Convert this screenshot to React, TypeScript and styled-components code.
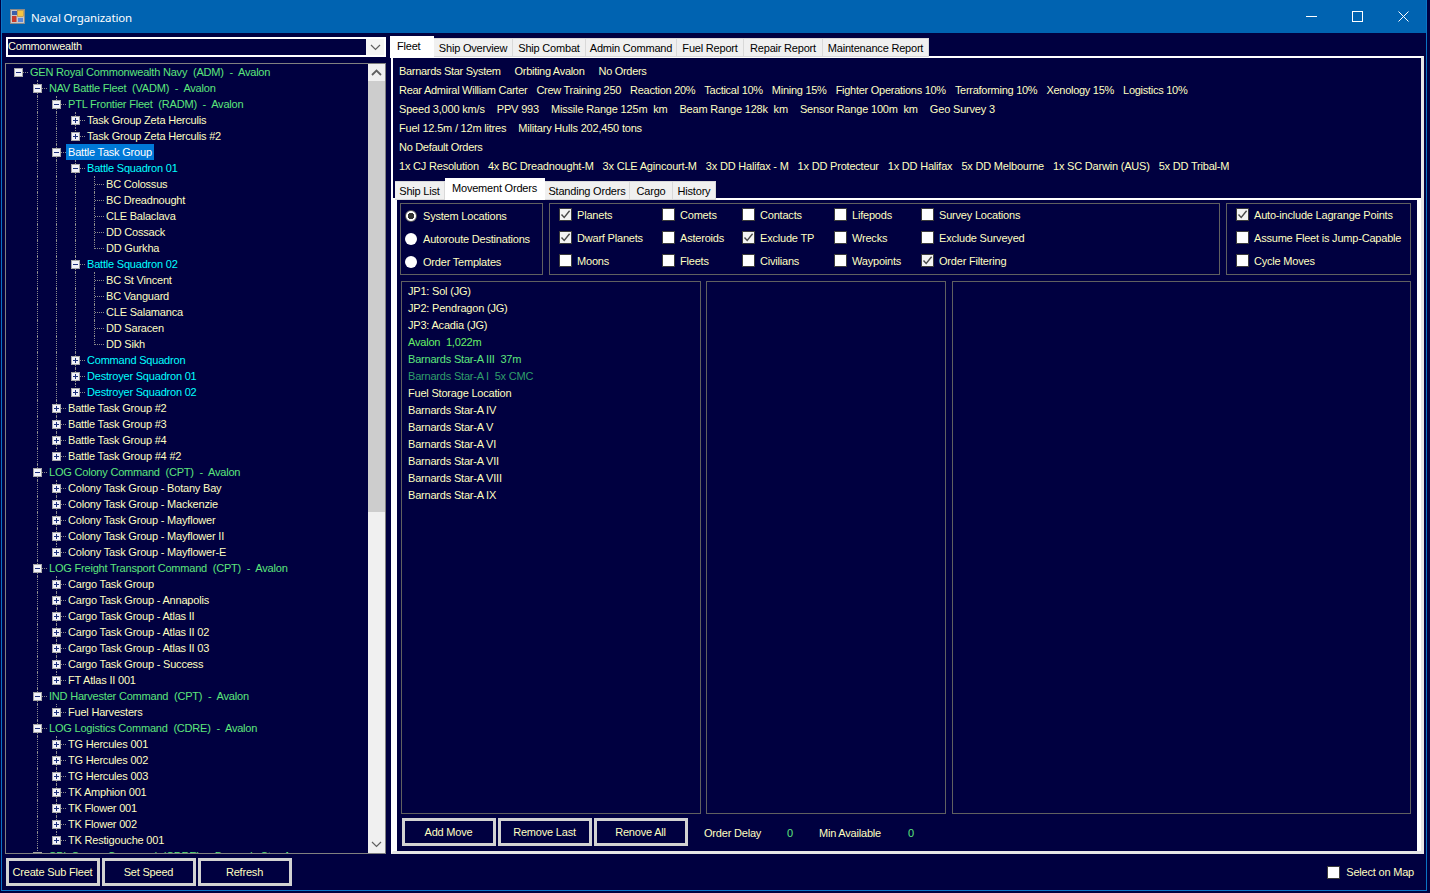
import React from "react";
import styled, { createGlobalStyle, css } from "styled-components";

const NAVY = "#000040";
const CREAM = "#ffffc0";
const GREEN = "#5ce67c";

const Global = createGlobalStyle`
  html, body { margin: 0; padding: 0; background: ${NAVY}; overflow: hidden; }
  body { font-family: "Liberation Sans", Arial, sans-serif; font-size: 11px; letter-spacing: -0.2px; color: ${CREAM}; }
  * { box-sizing: border-box; }
`;

const Window = styled.div`
  margin-left: 1px;
  width: 1426px;
  height: 891px;
  background: ${NAVY};
  border: 1px solid #0a74c4;
  border-top: 0;
  display: flex;
  flex-direction: column;
`;
const TitleBar = styled.header`
  height: 33px;
  flex: none;
  background: #0063b1;
  display: flex;
  align-items: center;
  padding-left: 8px;
  color: #fff;
  font-family: "Noto Sans", sans-serif;
  font-size: 11.5px;
  letter-spacing: -0.15px;
`;
const TitleText = styled.span`
  margin-left: 6px;
  padding-top: 1px;
  flex: 1;
`;
const WinButton = styled.div`
  width: 46px;
  height: 33px;
  display: flex;
  align-items: center;
  justify-content: center;
`;
const Body = styled.div`
  flex: 1;
  padding: 4px 2px 0 3px;
  display: flex;
  flex-direction: column;
`;
const TopRow = styled.div`
  display: flex;
  gap: 5px;
  height: 817px;
`;
const LeftCol = styled.div`
  width: 381px;
  flex: none;
  display: flex;
  flex-direction: column;
`;
const Combo = styled.div`
  height: 20px;
  margin-left: 1px;
  width: 380px;
  flex: none;
  border: 2px solid #fff;
  background: #f4f4f4;
  display: flex;
`;
const ComboText = styled.div`
  flex: 1;
  background: ${NAVY};
  line-height: 15px;
  color: #ffffd8;
`;
const ComboArrow = styled.div`
  width: 18px;
  display: flex;
  align-items: center;
  justify-content: center;
`;
const TreeBox = styled.div`
  margin-top: 6px;
  flex: 1;
  border: 1px solid #808080;
  display: flex;
  min-height: 0;
`;
const TreeScroll = styled.div`
  flex: 1;
  overflow: hidden;
`;
const Row = styled.div`
  height: 16px;
  display: flex;
  padding-left: 3px;
  white-space: pre;
`;
const Cell = styled.div<{ $v?: "full" | "half"; $elbow?: boolean }>`
  width: 19px;
  height: 16px;
  flex: none;
  position: relative;
  ${(p) =>
    p.$v &&
    css`
      &::before {
        content: "";
        position: absolute;
        left: 9px;
        top: 0;
        height: ${p.$v === "full" ? "16px" : "9px"};
        border-left: 1px dotted #8a8a8a;
      }
    `}
  ${(p) =>
    p.$elbow &&
    css`
      &::after {
        content: "";
        position: absolute;
        left: 10px;
        top: 8px;
        width: 9px;
        border-top: 1px dotted #8a8a8a;
      }
    `}
`;
const Expander = styled.span<{ $open: boolean }>`
  position: absolute;
  left: 5px;
  top: 4px;
  width: 9px;
  height: 9px;
  z-index: 1;
  background: #f2f2fa;
  border: 1px solid #a6a6a6;
  &::before {
    content: "";
    position: absolute;
    left: 1px;
    top: 3px;
    width: 5px;
    height: 1px;
    background: #1c2f7a;
  }
  ${(p) =>
    !p.$open &&
    css`
      &::after {
        content: "";
        position: absolute;
        left: 3px;
        top: 1px;
        width: 1px;
        height: 5px;
        background: #1c2f7a;
      }
    `}
`;
const TONES: Record<string, string> = { g: GREEN, c: "#00ffff", y: CREAM };
const Label = styled.span<{ $tone: string; $selected?: boolean }>`
  height: 16px;
  line-height: 16px;
  padding: 0 2px;
  color: ${(p) => (p.$selected ? "#ffffff" : TONES[p.$tone])};
  background: ${(p) => (p.$selected ? "#0078d7" : "transparent")};
`;
const ScrollBar = styled.div`
  width: 17px;
  flex: none;
  background: #f0f0f0;
  display: flex;
  flex-direction: column;
`;
const ScrollButton = styled.div`
  height: 17px;
  flex: none;
  display: flex;
  align-items: center;
  justify-content: center;
`;
const ScrollThumb = styled.div`
  height: 431px;
  flex: none;
  background: #cdcdcd;
`;
const ScrollGap = styled.div`
  flex: 1;
`;
const RightCol = styled.div`
  width: 1033px;
  flex: none;
  margin-top: -1px;
  display: flex;
  flex-direction: column;
  min-height: 0;
`;
const TabStrip = styled.div<{ $h: number; $left: number }>`
  display: flex;
  height: ${(p) => p.$h}px;
  flex: none;
  padding-left: ${(p) => p.$left}px;
  position: relative;
  z-index: 2;
`;
const Tab = styled.div<{ $w: number; $active?: boolean; $top: number; $shift?: number }>`
  width: ${(p) => p.$w}px;
  color: #000;
  white-space: nowrap;
  text-align: center;
  flex: none;
  margin-left: ${(p) => p.$shift || 0}px;
  ${(p) =>
    p.$active
      ? css`
          height: 22px;
          background: #fff;
          line-height: 20px;
          text-align: left;
          padding-left: 7px;
        `
      : css`
          height: 19px;
          margin-top: ${p.$top}px;
          background: #f0f0f0;
          border: 1px solid #d9d9d9;
          border-left: 0;
          line-height: 18px;
        `}
`;
const OuterFrame = styled.div`
  flex: 1;
  min-height: 0;
  border-top: 2px solid #fff;
  border-left: 2px solid #fff;
  border-right: 3px solid #e6e6e6;
  border-bottom: 3px solid #e6e6e6;
  background: ${NAVY};
  display: flex;
  flex-direction: column;
`;
const InfoBlock = styled.div`
  height: 120px;
  flex: none;
  padding: 4px 0 0 6px;
`;
const InfoRow = styled.div<{ $gap: number; $ls: number }>`
  height: 19px;
  line-height: 18px;
  display: flex;
  gap: ${(p) => p.$gap}px;
  letter-spacing: ${(p) => p.$ls}px;
  white-space: pre;
`;
const InnerFrame = styled.div`
  flex: 1;
  min-height: 0;
  border-top: 2px solid #fff;
  border-left: 4px solid #fff;
  border-right: 4px solid #fff;
  background: ${NAVY};
  padding: 3px 6px 0 3px;
  display: flex;
  flex-direction: column;
`;
const GroupRow = styled.div`
  display: flex;
  gap: 6px;
  height: 72px;
  flex: none;
`;
const Group = styled.div<{ $w: number }>`
  width: ${(p) => p.$w}px;
  flex: none;
  border: 1px solid #606060;
`;
const RadioList = styled.div`
  padding: 0 0 0 4px;
  display: grid;
  grid-auto-rows: 23px;
`;
const RadioRow = styled.label`
  display: flex;
  align-items: center;
  gap: 6px;
  white-space: nowrap;
`;
const RadioDot = styled.span<{ $on?: boolean }>`
  width: 12px;
  height: 12px;
  flex: none;
  border-radius: 50%;
  background: #fff;
  ${(p) =>
    p.$on &&
    css`
      border: 1px solid #555;
      background: radial-gradient(circle, #333 0 3px, #fff 3.5px);
    `}
`;
const CheckGrid = styled.div<{ $cols: string }>`
  display: grid;
  grid-template-columns: ${(p) => p.$cols};
  padding-left: 9px;
  margin-top: -1px;
  grid-auto-flow: column;
  grid-template-rows: repeat(3, 23px);
`;
const CheckRow = styled.label`
  display: flex;
  align-items: center;
  gap: 5px;
  white-space: nowrap;
  height: 23px;
`;
const Box = styled.span<{ $on?: boolean }>`
  width: 13px;
  height: 13px;
  flex: none;
  background: ${(p) => (p.$on ? "#f4f4f4" : "#fff")};
  border: 1px solid #3c3c3c;
  display: flex;
  align-items: center;
  justify-content: center;
`;
const ListRow = styled.div`
  margin-top: 6px;
  height: 533px;
  flex: none;
  display: flex;
`;
const ListBox = styled.div<{ $w: number; $gap: number }>`
  width: ${(p) => p.$w}px;
  margin-left: ${(p) => p.$gap}px;
  flex: none;
  border: 1px solid #606060;
  padding: 1px 0 0 6px;
`;
const ListItem = styled.div<{ $c?: string }>`
  height: 17px;
  line-height: 17px;
  white-space: pre;
  color: ${(p) => p.$c || CREAM};
`;
const ActionRow = styled.div`
  margin-top: 4px;
  display: flex;
  align-items: center;
  padding-left: 2px;
  gap: 2px;
`;
const Btn = styled.div`
  width: 94px;
  height: 28px;
  flex: none;
  border: 3px solid #d2d2d2;
  display: flex;
  align-items: center;
  justify-content: center;
  padding: 0 1px 1px 0;
  white-space: nowrap;
`;
const Stat = styled.span<{ $w: number; $c?: string; $lead?: number }>`
  width: ${(p) => p.$w}px;
  margin-left: ${(p) => p.$lead || 0}px;
  flex: none;
  color: ${(p) => p.$c || CREAM};
  padding-top: 2px;
  white-space: nowrap;
`;
const Footer = styled.div`
  margin-top: 4px;
  height: 28px;
  padding: 0 10px 0 1px;
  display: flex;
  align-items: center;
  gap: 2px;
`;
const FooterSpacer = styled.div`
  flex: 1;
`;
const FooterCheck = styled(CheckRow)`
  gap: 6px;
`;

type N = [number, "g" | "c" | "y", "o" | "+" | "", string];
const group = (d: number, names: string[]): N[] => names.map((t) => [d, "y", "+", t] as N);
const leaves = (d: number, names: string[]): N[] => names.map((t) => [d, "y", "", t] as N);

const tree: N[] = [
  [0, "g", "o", "GEN Royal Commonwealth Navy  (ADM)  -  Avalon"],
  [1, "g", "o", "NAV Battle Fleet  (VADM)  -  Avalon"],
  [2, "g", "o", "PTL Frontier Fleet  (RADM)  -  Avalon"],
  ...group(3, ["Task Group Zeta Herculis", "Task Group Zeta Herculis #2"]),
  [2, "y", "o", "Battle Task Group"],
  [3, "c", "o", "Battle Squadron 01"],
  ...leaves(4, ["BC Colossus", "BC Dreadnought", "CLE Balaclava", "DD Cossack", "DD Gurkha"]),
  [3, "c", "o", "Battle Squadron 02"],
  ...leaves(4, ["BC St Vincent", "BC Vanguard", "CLE Salamanca", "DD Saracen", "DD Sikh"]),
  [3, "c", "+", "Command Squadron"],
  [3, "c", "+", "Destroyer Squadron 01"],
  [3, "c", "+", "Destroyer Squadron 02"],
  ...group(2, ["Battle Task Group #2", "Battle Task Group #3", "Battle Task Group #4", "Battle Task Group #4 #2"]),
  [1, "g", "o", "LOG Colony Command  (CPT)  -  Avalon"],
  ...group(2, [
    "Colony Task Group - Botany Bay",
    "Colony Task Group - Mackenzie",
    "Colony Task Group - Mayflower",
    "Colony Task Group - Mayflower II",
    "Colony Task Group - Mayflower-E",
  ]),
  [1, "g", "o", "LOG Freight Transport Command  (CPT)  -  Avalon"],
  ...group(2, [
    "Cargo Task Group",
    "Cargo Task Group - Annapolis",
    "Cargo Task Group - Atlas II",
    "Cargo Task Group - Atlas II 02",
    "Cargo Task Group - Atlas II 03",
    "Cargo Task Group - Success",
    "FT Atlas II 001",
  ]),
  [1, "g", "o", "IND Harvester Command  (CPT)  -  Avalon"],
  ...group(2, ["Fuel Harvesters"]),
  [1, "g", "o", "LOG Logistics Command  (CDRE)  -  Avalon"],
  ...group(2, [
    "TG Hercules 001",
    "TG Hercules 002",
    "TG Hercules 003",
    "TK Amphion 001",
    "TK Flower 001",
    "TK Flower 002",
    "TK Restigouche 001",
  ]),
  [1, "g", "o", "SPL Survey Command  (CDRE)  -  Barnards Star-A"],
];

const continues = (i: number, col: number) => {
  for (let j = i + 1; j < tree.length; j++) {
    if (tree[j][0] === col) return true;
    if (tree[j][0] < col) return false;
  }
  return false;
};

const TreeRows = () => (
  <>
    {tree.map((n, i) => {
      const [depth, tone, exp, text] = n;
      const cells = [];
      for (let c = 0; c <= depth; c++) {
        const cont = continues(i, c);
        if (c === depth) {
          cells.push(
            <Cell key={c} $elbow $v={depth === 0 ? undefined : cont ? "full" : "half"}>
              {exp && <Expander $open={exp === "o"} />}
            </Cell>
          );
        } else {
          cells.push(<Cell key={c} $v={cont ? "full" : undefined} />);
        }
      }
      return (
        <Row key={i}>
          {cells}
          <Label $tone={tone} $selected={text === "Battle Task Group"}>
            {text}
          </Label>
        </Row>
      );
    })}
  </>
);

const Chevron = ({ up, color = "#606060" }: { up?: boolean; color?: string }) => (
  <svg width="11" height="7" viewBox="0 0 11 7">
    <path d={up ? "M1 6 L5.5 1.5 L10 6" : "M1 1 L5.5 5.5 L10 1"} fill="none" stroke={color} strokeWidth={up ? 1.8 : 1.2} />
  </svg>
);

const Tick = () => (
  <svg width="11" height="11" viewBox="0 0 11 11">
    <path d="M1.5 5.5 L4.2 8.5 L9.6 1.8" fill="none" stroke="#4a4a4a" strokeWidth="1.4" />
  </svg>
);

const Check = ({ on, children }: { on?: boolean; children: string }) => (
  <CheckRow>
    <Box $on={on}>{on && <Tick />}</Box>
    {children}
  </CheckRow>
);

const AppIcon = () => (
  <svg width="15" height="15" viewBox="0 0 15 15">
    <rect x="0.5" y="0.5" width="14" height="14" fill="#c8c8c8" stroke="#8a8a8a" />
    <rect x="2" y="2" width="5" height="4" fill="#3b5fa8" />
    <rect x="7.5" y="1.5" width="6" height="6" fill="#f5c542" stroke="#a8802a" strokeWidth="0.5" />
    <rect x="2" y="7" width="4.5" height="6" fill="#c83a2a" />
    <rect x="8" y="9" width="5" height="4" fill="#5a86d8" />
  </svg>
);

const mainTabs: [string, number][] = [
  ["Ship Overview", 79],
  ["Ship Combat", 73],
  ["Admin Command", 91],
  ["Fuel Report", 67],
  ["Repair Report", 79],
  ["Maintenance Report", 106],
];

const info: [number, number, string[]][] = [
  [14, -0.3, ["Barnards Star System", "Orbiting Avalon", "No Orders"]],
  [9, -0.27, ["Rear Admiral William Carter", "Crew Training 250", "Reaction 20%", "Tactical 10%", "Mining 15%", "Fighter Operations 10%", "Terraforming 10%", "Xenology 15%", "Logistics 10%"]],
  [12, -0.18, ["Speed 3,000 km/s", "PPV 993", "Missile Range 125m  km", "Beam Range 128k  km", "Sensor Range 100m  km", "Geo Survey 3"]],
  [12, -0.2, ["Fuel 12.5m / 12m litres", "Military Hulls 202,450 tons"]],
  [12, -0.3, ["No Default Orders"]],
  [9, -0.2, ["1x CJ Resolution", "4x BC Dreadnought-M", "3x CLE Agincourt-M", "3x DD Halifax - M", "1x DD Protecteur", "1x DD Halifax", "5x DD Melbourne", "1x SC Darwin (AUS)", "5x DD Tribal-M"]],
];

const midChecks: [string, boolean][] = [
  ["Planets", true], ["Dwarf Planets", true], ["Moons", false],
  ["Comets", false], ["Asteroids", false], ["Fleets", false],
  ["Contacts", false], ["Exclude TP", true], ["Civilians", false],
  ["Lifepods", false], ["Wrecks", false], ["Waypoints", false],
  ["Survey Locations", false], ["Exclude Surveyed", false], ["Order Filtering", true],
];

const moves: [string, string?][] = [
  ["JP1: Sol (JG)"],
  ["JP2: Pendragon (JG)"],
  ["JP3: Acadia (JG)"],
  ["Avalon  1,022m", "#66f066"],
  ["Barnards Star-A III  37m", "#5ce67c"],
  ["Barnards Star-A I  5x CMC", "#2f9e6a"],
  ["Fuel Storage Location"],
  ["Barnards Star-A IV"],
  ["Barnards Star-A V"],
  ["Barnards Star-A VI"],
  ["Barnards Star-A VII"],
  ["Barnards Star-A VIII"],
  ["Barnards Star-A IX"],
];

export default function App() {
  return (
    <>
      <Global />
      <Window>
        <TitleBar>
          <AppIcon />
          <TitleText>Naval Organization</TitleText>
          <WinButton>
            <svg width="11" height="11" viewBox="0 0 11 11"><path d="M0 5.5 H11" stroke="#fff" strokeWidth="1" /></svg>
          </WinButton>
          <WinButton>
            <svg width="11" height="11" viewBox="0 0 11 11"><rect x="0.5" y="0.5" width="10" height="10" fill="none" stroke="#fff" /></svg>
          </WinButton>
          <WinButton>
            <svg width="11" height="11" viewBox="0 0 11 11"><path d="M0.5 0.5 L10.5 10.5 M10.5 0.5 L0.5 10.5" stroke="#fff" strokeWidth="1" /></svg>
          </WinButton>
        </TitleBar>
        <Body>
          <TopRow>
            <LeftCol>
              <Combo>
                <ComboText>Commonwealth</ComboText>
                <ComboArrow><Chevron /></ComboArrow>
              </Combo>
              <TreeBox>
                <TreeScroll><TreeRows /></TreeScroll>
                <ScrollBar>
                  <ScrollButton><Chevron up /></ScrollButton>
                  <ScrollThumb />
                  <ScrollGap />
                  <ScrollButton><Chevron /></ScrollButton>
                </ScrollBar>
              </TreeBox>
            </LeftCol>
            <RightCol>
              <TabStrip $h={20} $left={0}>
                <Tab $w={44} $top={0} $active $shift={-1}>Fleet</Tab>
                {mainTabs.map(([t, w]) => (
                  <Tab key={t} $w={w} $top={2}>{t}</Tab>
                ))}
              </TabStrip>
              <OuterFrame>
                <InfoBlock>
                  {info.map(([gap, ls, items], i) => (
                    <InfoRow key={i} $gap={gap} $ls={ls}>
                      {items.map((t) => <span key={t}>{t}</span>)}
                    </InfoRow>
                  ))}
                </InfoBlock>
                <TabStrip $h={20} $left={2}>
                  <Tab $w={50} $top={3}>Ship List</Tab>
                  <Tab $w={100} $top={0} $active>Movement Orders</Tab>
                  <Tab $w={85} $top={3}>Standing Orders</Tab>
                  <Tab $w={43} $top={3}>Cargo</Tab>
                  <Tab $w={43} $top={3}>History</Tab>
                </TabStrip>
                <InnerFrame>
                  <GroupRow>
                    <Group $w={143}>
                      <RadioList>
                        <RadioRow><RadioDot $on />System Locations</RadioRow>
                        <RadioRow><RadioDot />Autoroute Destinations</RadioRow>
                        <RadioRow><RadioDot />Order Templates</RadioRow>
                      </RadioList>
                    </Group>
                    <Group $w={671}>
                      <CheckGrid $cols="103px 80px 92px 87px 1fr">
                        {midChecks.map(([t, on]) => <Check key={t} on={on}>{t}</Check>)}
                      </CheckGrid>
                    </Group>
                    <Group $w={185}>
                      <CheckGrid $cols="1fr">
                        <Check on>Auto-include Lagrange Points</Check>
                        <Check>Assume Fleet is Jump-Capable</Check>
                        <Check>Cycle Moves</Check>
                      </CheckGrid>
                    </Group>
                  </GroupRow>
                  <ListRow>
                    <ListBox $w={300} $gap={1}>
                      {moves.map(([t, c]) => <ListItem key={t} $c={c}>{t}</ListItem>)}
                    </ListBox>
                    <ListBox $w={240} $gap={5} />
                    <ListBox $w={459} $gap={6} />
                  </ListRow>
                  <ActionRow>
                    <Btn>Add Move</Btn>
                    <Btn>Remove Last</Btn>
                    <Btn>Renove All</Btn>
                    <Stat $w={81} $lead={14}>Order Delay</Stat>
                    <Stat $w={30} $c={GREEN}>0</Stat>
                    <Stat $w={87}>Min Available</Stat>
                    <Stat $w={20} $c={GREEN}>0</Stat>
                  </ActionRow>
                </InnerFrame>
              </OuterFrame>
            </RightCol>
          </TopRow>
          <Footer>
            <Btn>Create Sub Fleet</Btn>
            <Btn>Set Speed</Btn>
            <Btn>Refresh</Btn>
            <FooterSpacer />
            <FooterCheck>
              <Box />
              Select on Map
            </FooterCheck>
          </Footer>
        </Body>
      </Window>
    </>
  );
}
